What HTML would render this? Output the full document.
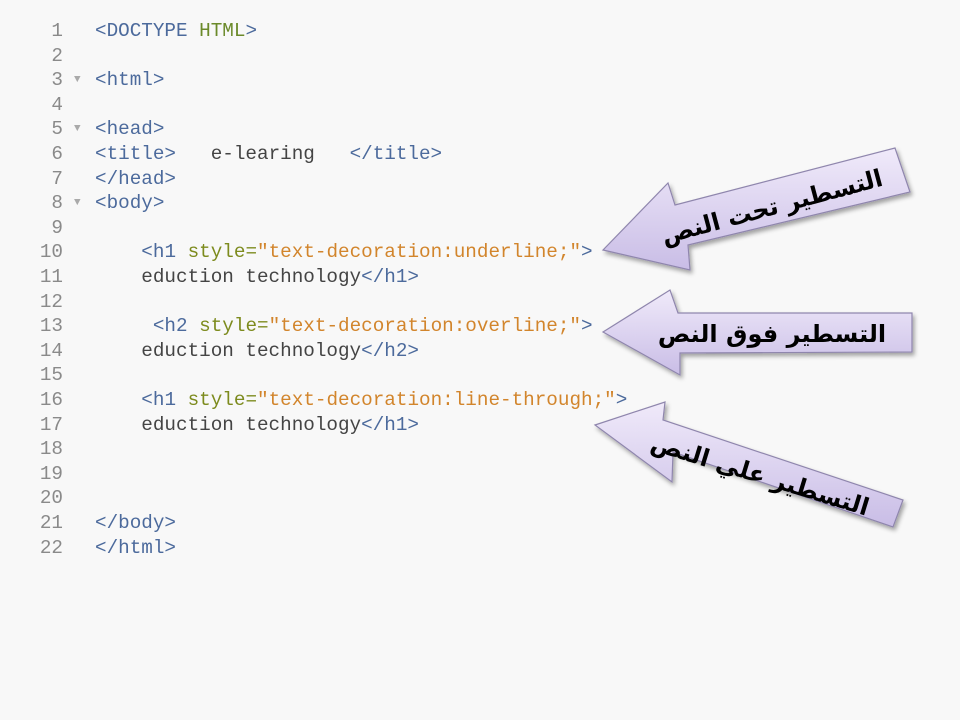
<!DOCTYPE html>
<html><head><style>
body{margin:0;width:960px;height:720px;background:#f8f8f8;overflow:hidden;position:relative;font-family:"Liberation Mono",monospace;font-size:19.3px;}
.l{position:absolute;left:0;height:25px;line-height:25px;white-space:pre;}
.n{position:absolute;width:63px;text-align:right;color:#8a8a8a;left:0}
.f{position:absolute;left:74px;color:#aaa;font-size:11px}
.c{position:absolute;left:95px;color:#444}
.t{color:#4c6a9c}.a{color:#7d8b1e}.s{color:#d2852c}.k{color:#6b8a2a}
svg{position:absolute;left:0;top:0}
</style></head><body>
<div class="l" style="top:19px"><span class="n">1</span><span class="c"><span class="t">&lt;DOCTYPE </span><span class="k">HTML</span><span class="t">&gt;</span></span></div>
<div class="l" style="top:44px"><span class="n">2</span></div>
<div class="l" style="top:68px"><span class="n">3</span><span class="f">▼</span><span class="c t">&lt;html&gt;</span></div>
<div class="l" style="top:93px"><span class="n">4</span></div>
<div class="l" style="top:117px"><span class="n">5</span><span class="f">▼</span><span class="c t">&lt;head&gt;</span></div>
<div class="l" style="top:142px"><span class="n">6</span><span class="c"><span class="t">&lt;title&gt;</span>   e-learing   <span class="t">&lt;/title&gt;</span></span></div>
<div class="l" style="top:167px"><span class="n">7</span><span class="c t">&lt;/head&gt;</span></div>
<div class="l" style="top:191px"><span class="n">8</span><span class="f">▼</span><span class="c t">&lt;body&gt;</span></div>
<div class="l" style="top:216px"><span class="n">9</span></div>
<div class="l" style="top:240px"><span class="n">10</span><span class="c">    <span class="t">&lt;h1 </span><span class="a">style=</span><span class="s">"text-decoration:underline;"</span><span class="t">&gt;</span></span></div>
<div class="l" style="top:265px"><span class="n">11</span><span class="c">    eduction technology<span class="t">&lt;/h1&gt;</span></span></div>
<div class="l" style="top:290px"><span class="n">12</span></div>
<div class="l" style="top:314px"><span class="n">13</span><span class="c">     <span class="t">&lt;h2 </span><span class="a">style=</span><span class="s">"text-decoration:overline;"</span><span class="t">&gt;</span></span></div>
<div class="l" style="top:339px"><span class="n">14</span><span class="c">    eduction technology<span class="t">&lt;/h2&gt;</span></span></div>
<div class="l" style="top:363px"><span class="n">15</span></div>
<div class="l" style="top:388px"><span class="n">16</span><span class="c">    <span class="t">&lt;h1 </span><span class="a">style=</span><span class="s">"text-decoration:line-through;"</span><span class="t">&gt;</span></span></div>
<div class="l" style="top:413px"><span class="n">17</span><span class="c">    eduction technology<span class="t">&lt;/h1&gt;</span></span></div>
<div class="l" style="top:437px"><span class="n">18</span></div>
<div class="l" style="top:462px"><span class="n">19</span></div>
<div class="l" style="top:486px"><span class="n">20</span></div>
<div class="l" style="top:511px"><span class="n">21</span><span class="c t">&lt;/body&gt;</span></div>
<div class="l" style="top:536px"><span class="n">22</span><span class="c t">&lt;/html&gt;</span></div>
<svg width="960" height="720">
<defs><linearGradient id="g" x1="0" y1="0" x2="0" y2="1"><stop offset="0" stop-color="#f0eafa"/><stop offset="1" stop-color="#c9bde6"/></linearGradient>
<filter id="sh"><feDropShadow dx="2" dy="3" stdDeviation="2" flood-opacity="0.35"/></filter></defs>
<g fill="url(#g)" stroke="#8f86ad" stroke-width="1.2" filter="url(#sh)">
<polygon points="603,250 668,183 675,205 895,148 910,192 688,245 690,270"/>
<polygon points="603,332 670,290 678,313 912,313 912,352 680,353 680,375"/>
<polygon points="595,425 665,402 663,420 903,500 893,527 673,452 672,482"/>
</g>
<g font-family="DejaVu Sans, sans-serif" font-weight="bold" font-size="24" fill="#000" text-anchor="middle">
<text x="772" y="215" transform="rotate(-15 772 207)" direction="rtl">التسطير تحت النص</text>
<text x="772" y="342" direction="rtl">التسطير فوق النص</text>
<text x="760" y="483" transform="rotate(17 760 475)" direction="rtl">التسطير علي النص</text>
</g>
</svg>
</body></html>
